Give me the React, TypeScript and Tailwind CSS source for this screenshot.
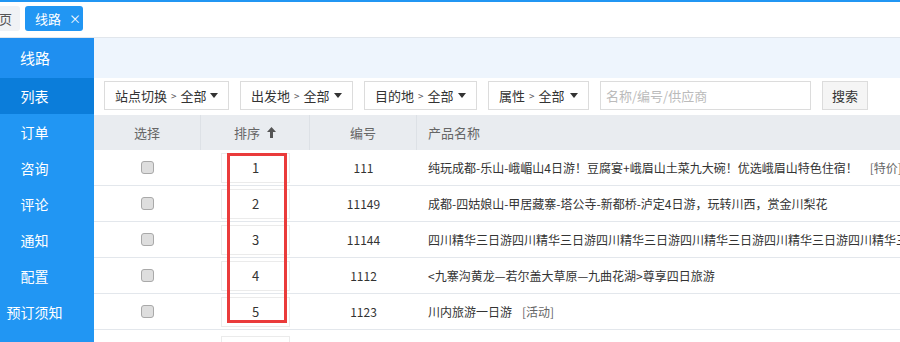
import React from 'react';

const menu = ['订单', '咨询', '评论', '通知', '配置', '预订须知'];

const filters = [
  { label: '站点切换', w: 'w-[125px]' },
  { label: '出发地', w: 'w-[113px]' },
  { label: '目的地', w: 'w-[113px]' },
  { label: '属性', w: 'w-[101px]' },
];

const rows = [
  { sort: '1', code: '111', name: '纯玩成都-乐山-峨嵋山4日游！豆腐宴+峨眉山土菜九大碗！优选峨眉山特色住宿！', tag: '[特价]', gap: 'ml-[12px]' },
  { sort: '2', code: '11149', name: '成都-四姑娘山-甲居藏寨-塔公寺-新都桥-泸定4日游，玩转川西，赏金川梨花', tag: '', gap: '' },
  { sort: '3', code: '11144', name: '四川精华三日游四川精华三日游四川精华三日游四川精华三日游四川精华三日游四川精华三日游四川精华三日游', tag: '', gap: '' },
  { sort: '4', code: '1112', name: '<九寨沟黄龙—若尔盖大草原—九曲花湖>尊享四日旅游', tag: '', gap: '' },
  { sort: '5', code: '1123', name: '川内旅游一日游', tag: '[活动]', gap: 'ml-[10px]' },
];

function Caret() {
  return (
    <svg width="8" height="5" viewBox="0 0 8 5" className="ml-auto shrink-0">
      <path d="M0 0h8L4 5z" fill="#333" />
    </svg>
  );
}

function SortArrow() {
  return (
    <svg width="9" height="11" viewBox="0 0 9 11" className="ml-[7px]">
      <path d="M4.5 0L9 5H6v6H3V5H0z" fill="#555" />
    </svg>
  );
}

export default function App() {
  return (
    <div
      className="w-[900px] h-[342px] overflow-hidden bg-white text-[13px] text-[#333]"
      style={{ fontFamily: '"Noto Sans CJK SC", "Noto Sans", sans-serif' }}
    >
      {/* tab bar */}
      <div className="h-[38px] border-t-2 border-[#2196f3] border-b border-b-[#e1e6ec] flex items-start pt-[4px] gap-[5px]">
        <div className="-ml-[22px] w-[42px] h-[25px] rounded-[3px] bg-[#f0f2f5] text-[#555] flex items-center justify-center">
          首页
        </div>
        <div className="w-[58px] h-[25px] rounded-[3px] bg-[#2196f3] text-white flex items-center pl-[10px]">
          <span>线路</span>
          <span className="ml-[8px] text-[12px] leading-none">×</span>
        </div>
      </div>

      <div className="flex h-[304px]">
        {/* sidebar */}
        <div className="w-[94px] shrink-0 bg-[#2196f3] text-white">
          <div className="h-[40px] flex items-center bg-[#1f8ff0]">
            <span className="w-[70px] text-center text-[15px]">线路</span>
          </div>
          <div className="h-[36px] flex items-center bg-[#0b7dda]">
            <span className="w-[69px] text-center text-[14px]">列表</span>
          </div>
          {menu.map((m) => (
            <div key={m} className="h-[36px] flex items-center">
              <span className="w-[69px] text-center text-[14px]">{m}</span>
            </div>
          ))}
        </div>

        {/* main */}
        <div className="flex-1 relative">
          <div className="h-[40px] bg-[#eef5fd]" />
          <div className="h-[37px] flex items-start pt-[3px] pl-[10px] gap-[11px]">
            {filters.map((f) => (
              <div
                key={f.label}
                className={`${f.w} h-[29px] border border-[#dcdcdc] bg-white flex items-center pl-[10px] pr-[10px] whitespace-nowrap`}
              >
                <span>{f.label}</span>
                <span className="mx-[4px] text-[10px] text-[#555]">&gt;</span>
                <span>全部</span>
                <Caret />
              </div>
            ))}
            <div className="w-[211px] h-[29px] border border-[#dcdcdc] flex items-center pl-[5px] text-[#bbb]">
              名称/编号/供应商
            </div>
            <div className="w-[46px] h-[29px] border border-[#dcdcdc] bg-[#f5f5f5] flex items-center justify-center">
              搜索
            </div>
          </div>

          {/* table */}
          <div className="flex h-[35px] bg-[#e9ecf0] text-[#666]">
            <div className="w-[107px] flex items-center justify-center border-r border-[#dde1e6]">选择</div>
            <div className="w-[109px] flex items-center justify-center border-r border-[#dde1e6]">
              排序
              <SortArrow />
            </div>
            <div className="w-[107px] flex items-center justify-center border-r border-[#dde1e6]">编号</div>
            <div className="flex-1 flex items-center pl-[11px]">产品名称</div>
          </div>
          {rows.map((r) => (
            <div key={r.sort} className="flex h-[36px] border-b border-[#e3e7ec] text-[12px]">
              <div className="w-[107px] flex items-center justify-center">
                <span className="w-[13px] h-[13px] rounded-[3px] border border-[#a9a9a9] bg-[#dedede]" />
              </div>
              <div className="w-[109px] flex items-center justify-center">
                <div className="w-[69px] h-[30px] border border-[#ebebeb] flex items-center justify-center text-[13px]">
                  {r.sort}
                </div>
              </div>
              <div className="w-[107px] flex items-center justify-center">{r.code}</div>
              <div className="flex-1 flex items-center pl-[11px] whitespace-nowrap overflow-hidden">
                {r.name}
                {r.tag && <span className={`${r.gap} text-[#666]`}>{r.tag}</span>}
              </div>
            </div>
          ))}
          <div className="flex h-[36px]">
            <div className="w-[107px]" />
            <div className="w-[109px] flex items-start justify-center pt-[6px]">
              <div className="w-[69px] h-[30px] border border-[#ebebeb]" />
            </div>
          </div>

          {/* red highlight annotation */}
          <div className="absolute left-[133px] top-[115px] w-[60px] h-[170px] border-[3px] border-[#ea3b3b]" />
        </div>
      </div>
    </div>
  );
}
